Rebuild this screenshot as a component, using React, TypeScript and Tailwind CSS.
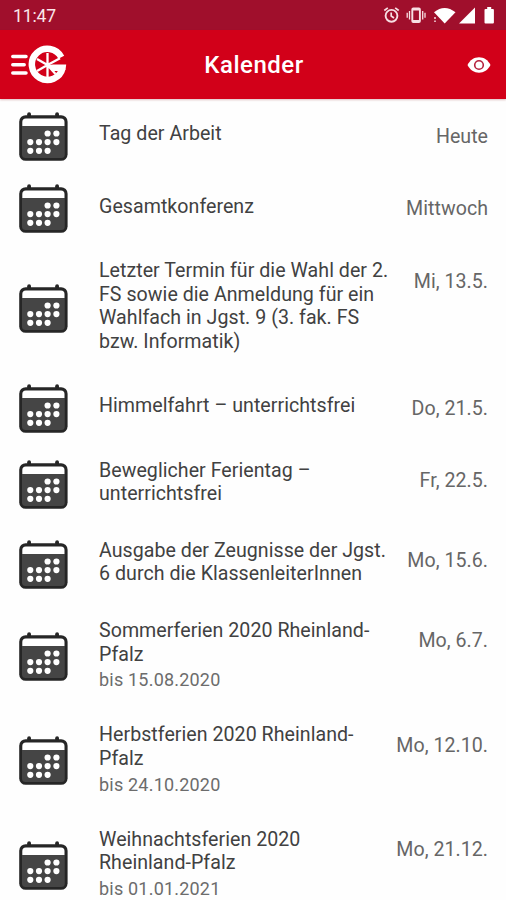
import React from 'react';

interface CalendarEvent {
  title: string;
  date: string;
  until?: string;
}

const EVENTS: CalendarEvent[] = [
  { title: 'Tag der Arbeit', date: 'Heute' },
  { title: 'Gesamtkonferenz', date: 'Mittwoch' },
  {
    title: 'Letzter Termin für die Wahl der 2. FS sowie die Anmeldung für ein Wahlfach in Jgst. 9 (3. fak. FS bzw. Informatik)',
    date: 'Mi, 13.5.',
  },
  { title: 'Himmelfahrt – unterrichtsfrei', date: 'Do, 21.5.' },
  { title: 'Beweglicher Ferientag – unterrichtsfrei', date: 'Fr, 22.5.' },
  { title: 'Ausgabe der Zeugnisse der Jgst. 6 durch die KlassenleiterInnen', date: 'Mo, 15.6.' },
  { title: 'Sommerferien 2020 Rheinland-Pfalz', date: 'Mo, 6.7.', until: '15.08.2020' },
  { title: 'Herbstferien 2020 Rheinland-Pfalz', date: 'Mo, 12.10.', until: '24.10.2020' },
  { title: 'Weihnachtsferien 2020 Rheinland-Pfalz', date: 'Mo, 21.12.', until: '01.01.2021' },
];

// columns/rows of the dots on the calendar sheet
const DOTS = [
  [28.6, 21.5], [37.4, 21.5],
  [11.3, 30.1], [20, 30.1], [28.6, 30.1], [37.4, 30.1],
  [11.3, 38.8], [20, 38.8], [28.6, 38.8],
];

function CalendarIcon() {
  return (
    <svg className="shrink-0" width="49" height="49" viewBox="0 0 49 49">
      <rect x="8.2" y="0.3" width="3.8" height="8" rx="1.9" fill="#262626" />
      <rect x="36.2" y="0.3" width="3.8" height="8" rx="1.9" fill="#262626" />
      <rect x="0.2" y="3.2" width="48.4" height="45.6" rx="6.5" fill="#262626" />
      <path d="M3 14h42.8v28.5a3.5 3.5 0 0 1-3.5 3.5H6.5A3.5 3.5 0 0 1 3 42.5z" fill="#454545" />
      <path d="M3.3 14V10A3.5 3.5 0 0 1 6.8 6.5H42A3.5 3.5 0 0 1 45.5 10V14z" fill="#fff" />
      {DOTS.map(([cx, cy]) => (
        <circle key={`${cx}-${cy}`} cx={cx} cy={cy} r="3.1" fill="#fff" />
      ))}
    </svg>
  );
}

function Logo() {
  return (
    <svg className="mt-px" width="56" height="40" viewBox="0 0 56 40" fill="none" stroke="#fff">
      <path d="M1.8 11.5h13.2M1.8 19.7h11.4M1.8 27.9h13.2" strokeWidth="3.5" strokeLinecap="round" />
      <path d="M50.3 12.2A15.6 15.6 0 1 0 51.6 23" strokeWidth="6.5" />
      <path d="M36.5 20V32M36.5 20V8M36.5 20L26 14M36.5 20L26 26M36.5 20L49 13.2M36.5 20L44.5 29" strokeWidth="2.3" />
      <path d="M36 20.2L42 19.5H55.2Q55 23.5 53.8 26H42z" fill="#fff" stroke="none" />
    </svg>
  );
}

function StatusIcons() {
  return (
    <svg width="112" height="20" viewBox="0 0 112 20" fill="none" stroke="#f7dfe3">
      <circle cx="8.5" cy="10.8" r="5.9" strokeWidth="1.9" />
      <path d="M8.2 7.5V11l2.8 2M1.3 5.5L4.8 2.8M15.7 5.5L12.2 2.8" strokeWidth="1.7" />
      <rect x="29.3" y="3.5" width="7.6" height="13.5" rx="1" strokeWidth="1.9" />
      <path d="M29.3 4.5h7.6M29.3 16h7.6" strokeWidth="2" />
      <path d="M26.5 6v8.5M24.2 7.8v5M39.7 6v8.5M42 7.8v5" strokeWidth="1.3" />
      <path d="M51 7.3Q61.5 -1.5 72.5 7.3L61.7 18.5z" fill="#fff" stroke="none" />
      <path d="M52 12v2M52 15.5v1.5" strokeWidth="1.5" />
      <path d="M92 2.5V18.5H76z" fill="#fff" stroke="none" />
      <path d="M102.5 4h1.7V2h4V4h1.7q1 0 1 1v12.5q0 1-1 1h-7.4q-1 0-1-1V5q0-1 1-1z" fill="#fff" stroke="none" />
    </svg>
  );
}

function EyeIcon() {
  return (
    <svg width="24" height="18" viewBox="0 0 24 18">
      <path d="M0.5 9C3 4 7.2 1.3 12 1.3S21 4 23.5 9C21 14 16.8 16.7 12 16.7S3 14 0.5 9z" fill="#fff" />
      <circle cx="12" cy="9" r="4.3" fill="#fff" stroke="#b5203c" strokeWidth="1.6" />
    </svg>
  );
}

const EventRow: React.FC<{ event: CalendarEvent }> = ({ event }) => (
  <li className="flex min-h-[72.4px] items-center pl-[19px] pr-[18px]">
    <CalendarIcon />
    <div className="ml-[31px] w-[296px] shrink-0 pt-[14.5px] pb-[18.6px]">
      <div className="text-[19.6px] leading-[23.5px] tracking-[0.04px] text-[#414141]">{event.title}</div>
      {event.until && (
        <div className="pt-[3.2px] text-[18px] leading-[21px] tracking-[0.2px] text-[#6c6c6c]">bis {event.until}</div>
      )}
    </div>
    <div className="-ml-4 flex-1 self-start whitespace-nowrap pt-[24.7px] text-right text-[19.6px] leading-6 tracking-[0.03px] text-[#666]">
      {event.date}
    </div>
  </li>
);

export default function App() {
  return (
    <div className="flex h-[900px] w-[506px] flex-col overflow-hidden bg-[#fefefe] font-['Roboto',sans-serif]">
      <div className="flex h-[30px] shrink-0 items-center justify-between bg-[#a00f2c] pl-[13px] pr-[11px] text-[17.5px] text-[#fae6ea]">
        <span className="pt-[2px] tracking-[-0.1px]">11:47</span>
        <StatusIcons />
      </div>
      <header className="z-10 grid h-[69px] shrink-0 grid-cols-[1fr_auto_1fr] items-center bg-[#d20019] pl-[11px] pr-[15px] shadow-[0_1px_2px_rgba(120,0,10,0.25)]">
        <Logo />
        <h1 className="pt-px pl-[6px] text-[24px] font-medium tracking-[0.5px] text-white">Kalender</h1>
        <div className="justify-self-end pt-px">
          <EyeIcon />
        </div>
      </header>
      <ul className="pt-[1.1px]">
        {EVENTS.map((event) => (
          <EventRow key={event.title} event={event} />
        ))}
      </ul>
    </div>
  );
}
